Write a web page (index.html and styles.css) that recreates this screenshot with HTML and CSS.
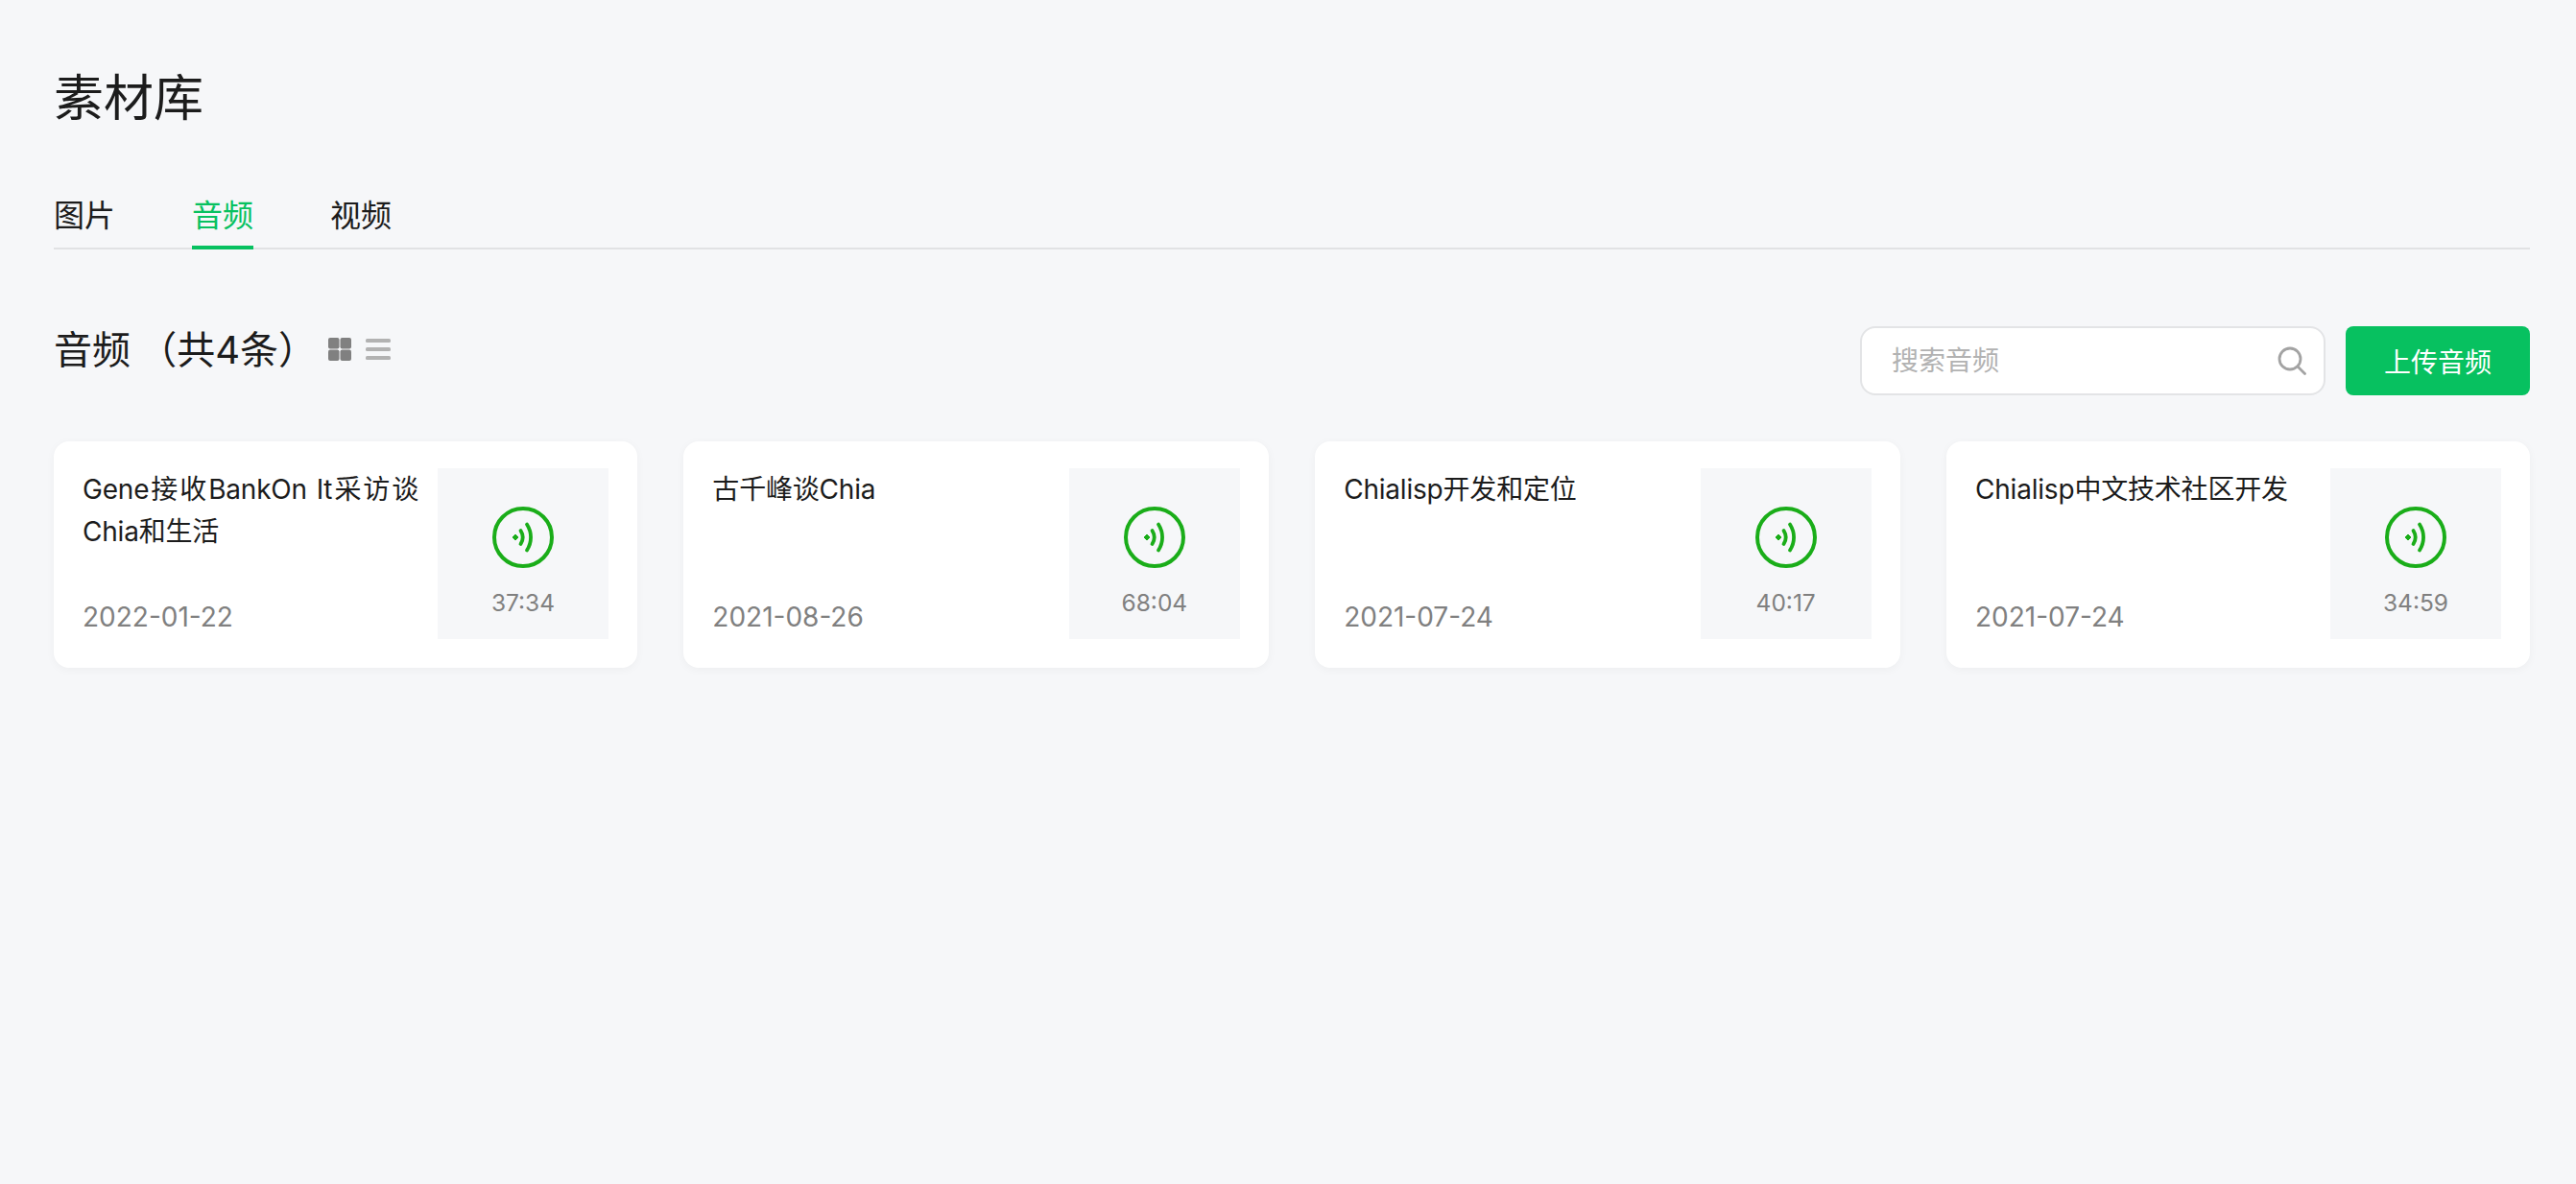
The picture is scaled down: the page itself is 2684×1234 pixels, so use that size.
FILE: index.html
```html
<!DOCTYPE html>
<html lang="zh-CN">

<head>
    <meta charset="UTF-8">
    <title>素材库</title>
    <link rel="stylesheet" href="styles.css">
</head>

<body>
    <div class="page">
        <h1 class="page-title">素材库</h1>

        <div class="tabs">
            <a class="tab">图片</a>
            <a class="tab active">音频</a>
            <a class="tab">视频</a>
        </div>

        <div class="toolbar">
            <div class="toolbar-left">
                <h2 class="section-title">音频 （共4条）</h2>
                <svg class="view-icon" width="24" height="24" viewBox="0 0 24 24">
                    <rect x="0" y="0" width="11.5" height="11.5" rx="2" fill="#808080"></rect>
                    <rect x="12.5" y="0" width="11.5" height="11.5" rx="2" fill="#808080"></rect>
                    <rect x="0" y="12.5" width="11.5" height="11.5" rx="2" fill="#808080"></rect>
                    <rect x="12.5" y="12.5" width="11.5" height="11.5" rx="2" fill="#808080"></rect>
                </svg>
                <svg class="view-icon list" width="26" height="24" viewBox="0 0 26 24">
                    <rect x="0" y="1" width="26" height="4" rx="1.5" fill="#b2b2b2"></rect>
                    <rect x="0" y="10" width="26" height="4" rx="1.5" fill="#b2b2b2"></rect>
                    <rect x="0" y="19" width="26" height="4" rx="1.5" fill="#b2b2b2"></rect>
                </svg>
            </div>
            <div class="toolbar-right">
                <div class="search">
                    <input class="search-input" type="text" placeholder="搜索音频">
                    <svg width="30" height="30" viewBox="0 0 30 30" fill="none" stroke="#a3a3a3" stroke-width="2.8">
                        <circle cx="13" cy="13" r="11"></circle>
                        <path d="M21 21l7.5 7.5" stroke-linecap="round"></path>
                    </svg>
                </div>
                <button class="upload-btn">上传音频</button>
            </div>
        </div>

        <div class="card-list">
            <div class="card">
                <div class="card-info">
                    <p class="card-title">Gene接收BankOn It采访谈Chia和生活</p>
                    <p class="card-date">2022-01-22</p>
                </div>
                <div class="thumb">
                    <svg class="audio-icon" width="64" height="64" viewBox="0 0 64 64" fill="none" stroke="#1aad19">
                        <circle cx="32" cy="32" r="30" stroke-width="4"></circle>
                        <path d="M24 29l3 3-3 3-3-3z" fill="#1aad19" stroke-width="1"></path>
                        <path d="M29.5 25c2.8 4.4 2.8 9.6 0 14M36 18.5c5.4 8.4 5.4 18.6 0 27" stroke-width="3.8" stroke-linecap="round"></path>
                    </svg>
                    <span class="duration">37:34</span>
                </div>
            </div>

            <div class="card">
                <div class="card-info">
                    <p class="card-title">古千峰谈Chia</p>
                    <p class="card-date">2021-08-26</p>
                </div>
                <div class="thumb">
                    <svg class="audio-icon" width="64" height="64" viewBox="0 0 64 64" fill="none" stroke="#1aad19">
                        <circle cx="32" cy="32" r="30" stroke-width="4"></circle>
                        <path d="M24 29l3 3-3 3-3-3z" fill="#1aad19" stroke-width="1"></path>
                        <path d="M29.5 25c2.8 4.4 2.8 9.6 0 14M36 18.5c5.4 8.4 5.4 18.6 0 27" stroke-width="3.8" stroke-linecap="round"></path>
                    </svg>
                    <span class="duration">68:04</span>
                </div>
            </div>

            <div class="card">
                <div class="card-info">
                    <p class="card-title">Chialisp开发和定位</p>
                    <p class="card-date">2021-07-24</p>
                </div>
                <div class="thumb">
                    <svg class="audio-icon" width="64" height="64" viewBox="0 0 64 64" fill="none" stroke="#1aad19">
                        <circle cx="32" cy="32" r="30" stroke-width="4"></circle>
                        <path d="M24 29l3 3-3 3-3-3z" fill="#1aad19" stroke-width="1"></path>
                        <path d="M29.5 25c2.8 4.4 2.8 9.6 0 14M36 18.5c5.4 8.4 5.4 18.6 0 27" stroke-width="3.8" stroke-linecap="round"></path>
                    </svg>
                    <span class="duration">40:17</span>
                </div>
            </div>

            <div class="card">
                <div class="card-info">
                    <p class="card-title">Chialisp中文技术社区开发</p>
                    <p class="card-date">2021-07-24</p>
                </div>
                <div class="thumb">
                    <svg class="audio-icon" width="64" height="64" viewBox="0 0 64 64" fill="none" stroke="#1aad19">
                        <circle cx="32" cy="32" r="30" stroke-width="4"></circle>
                        <path d="M24 29l3 3-3 3-3-3z" fill="#1aad19" stroke-width="1"></path>
                        <path d="M29.5 25c2.8 4.4 2.8 9.6 0 14M36 18.5c5.4 8.4 5.4 18.6 0 27" stroke-width="3.8" stroke-linecap="round"></path>
                    </svg>
                    <span class="duration">34:59</span>
                </div>
            </div>
        </div>
    </div>
</body>

</html>
```

FILE: styles.css
```css
* {
    margin: 0;
    padding: 0;
    box-sizing: border-box;
}

body {
    min-height: 100vh;
    background: #f6f7f9;
    color: #1c1c1c;
    font-family: Inter, "Noto Sans CJK SC", sans-serif;
}

.page {
    padding: 66px 48px 0 56px;
}

.page-title {
    font-size: 52px;
    font-weight: 400;
    line-height: 74px;
}

/* Tabs */
.tabs {
    display: flex;
    gap: 80px;
    height: 62px;
    margin-top: 58px;
    border-bottom: 2px solid #e1e2e4;
}

.tab {
    height: 62px;
    padding-top: 3px;
    font-size: 32px;
    line-height: 48px;
}

.tab.active {
    color: #07c160;
    border-bottom: 4px solid #07c160;
}

/* Toolbar */
.toolbar {
    display: flex;
    justify-content: space-between;
    align-items: flex-start;
    margin-top: 80px;
}

.toolbar-left {
    display: flex;
    align-items: center;
    height: 48px;
}

.section-title {
    width: 286px;
    padding-top: 2px;
    font-size: 40px;
    font-weight: 400;
    line-height: 46px;
    word-spacing: -3px;
}

.view-icon.list {
    margin-left: 15px;
}

.toolbar-right {
    display: flex;
    gap: 21px;
}

.search {
    display: flex;
    align-items: center;
    width: 485px;
    height: 72px;
    padding: 0 18px 0 31px;
    background: #fff;
    border: 2px solid #e3e4e6;
    border-radius: 16px;
}

.search-input {
    flex: 1;
    min-width: 0;
    border: 0;
    outline: 0;
    background: transparent;
    font-family: inherit;
    font-size: 28px;
}

.search-input::placeholder {
    color: #b2b2b2;
}

.upload-btn {
    width: 192px;
    height: 72px;
    border: 0;
    border-radius: 8px;
    background: #07c160;
    color: #fff;
    font-family: inherit;
    font-size: 28px;
}

/* Cards */
.card-list {
    display: grid;
    grid-template-columns: 608px 609.5px 609.5px 608px;
    justify-content: space-between;
    margin-top: 48px;
}

.card {
    display: flex;
    justify-content: space-between;
    height: 236px;
    padding: 28px 30px 30px;
    background: #fff;
    border-radius: 16px;
    box-shadow: 0 2px 10px rgba(0, 0, 0, 0.04);
}

.card-info {
    display: flex;
    flex-direction: column;
    justify-content: space-between;
    width: 350px;
    padding-bottom: 3px;
}

.card-title {
    font-size: 28px;
    line-height: 44px;
    letter-spacing: -0.2px;
    text-align: justify;
}

.card-date {
    font-size: 28px;
    line-height: 40px;
    color: #808080;
}

.thumb {
    display: flex;
    flex-direction: column;
    align-items: center;
    flex: 0 0 178px;
    height: 178px;
    padding-top: 40px;
    background: #f6f7f9;
}

.audio-icon {
    display: block;
}

.duration {
    margin-top: 20px;
    font-size: 24.5px;
    line-height: 33px;
    color: #808080;
}
```
